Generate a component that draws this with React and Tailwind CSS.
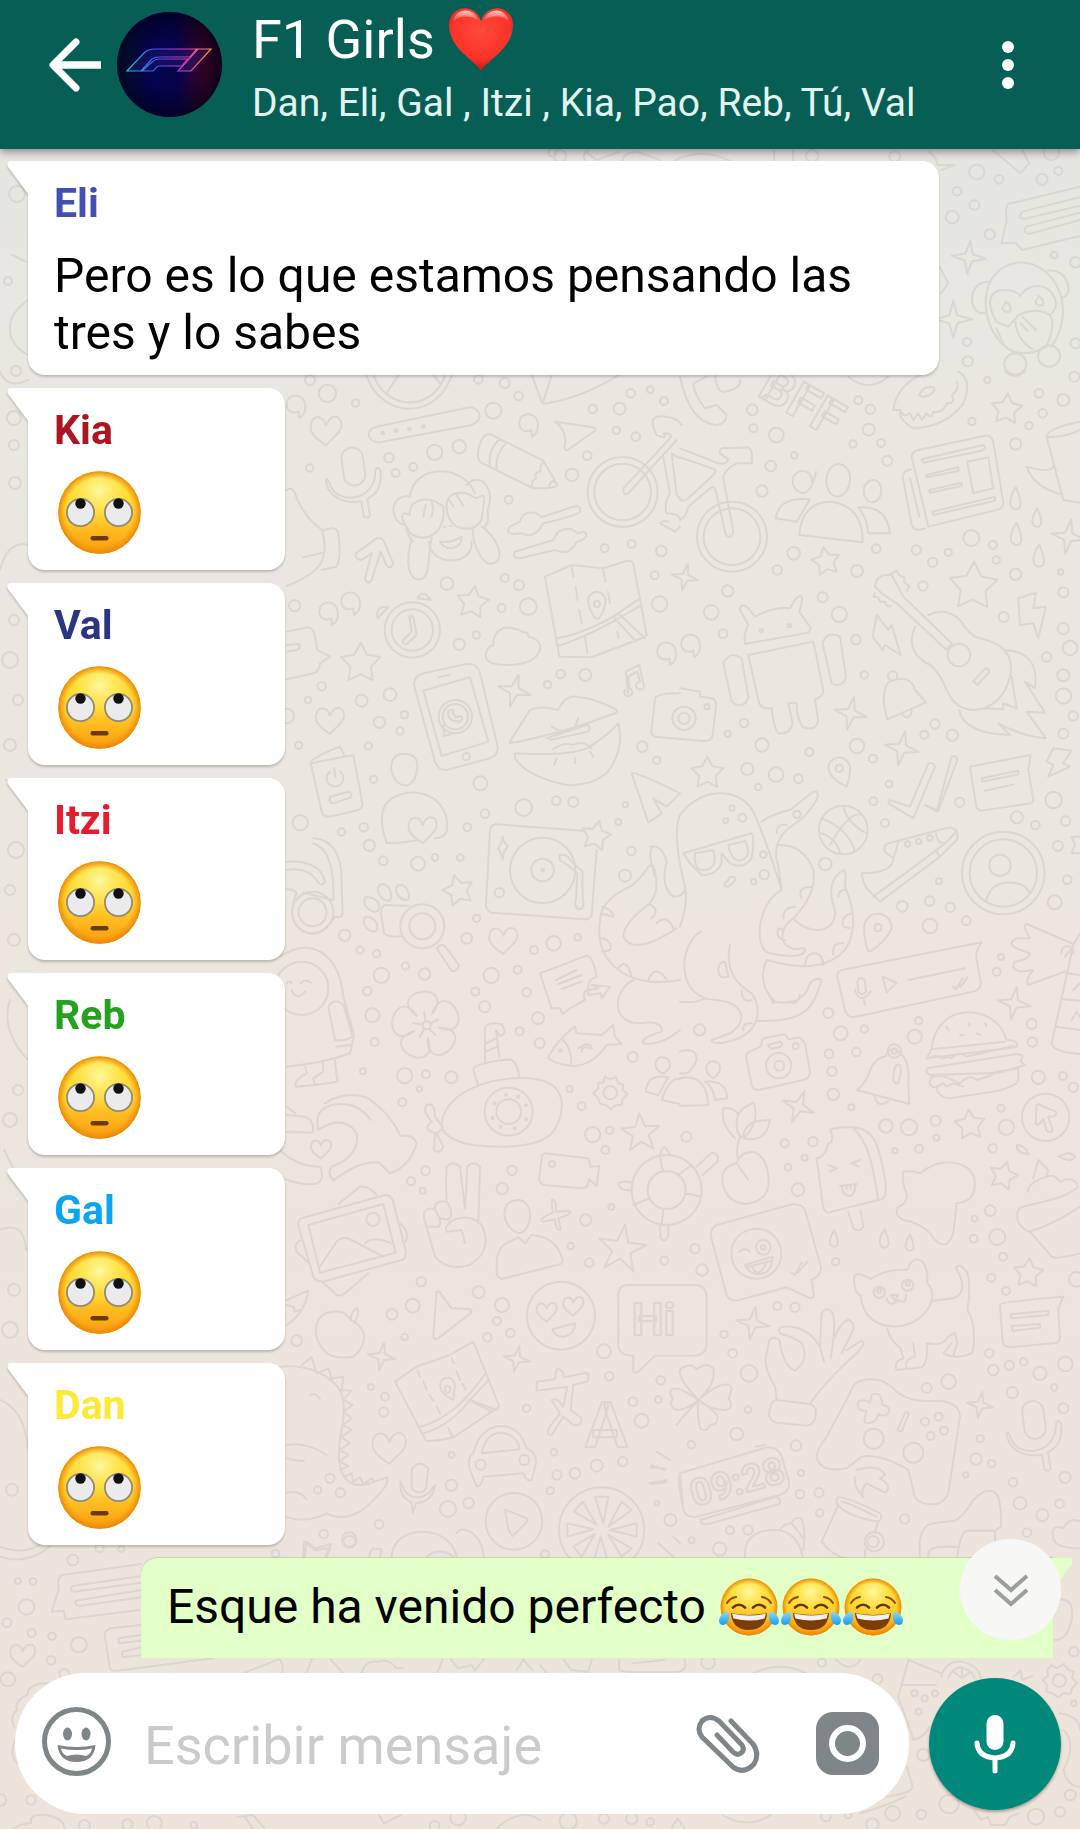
import React from "react";

/* ---------- wallpaper ---------- */

const star = (x, y, r, rot = 0, inner = 0.52) => {
  let d = "";
  for (let i = 0; i < 10; i++) {
    const a = ((rot + i * 36 - 90) * Math.PI) / 180;
    const k = i % 2 ? r * inner : r;
    d += (i ? "L" : "M") + (x + k * Math.cos(a)).toFixed(1) + " " + (y + k * Math.sin(a)).toFixed(1);
  }
  return d + "Z";
};
const spark = (x, y, r, rot = 10) => {
  let d = "";
  for (let i = 0; i < 8; i++) {
    const a = ((rot + i * 45 - 90) * Math.PI) / 180;
    const k = i % 2 ? r * 0.3 : r;
    d += (i ? "L" : "M") + (x + k * Math.cos(a)).toFixed(1) + " " + (y + k * Math.sin(a)).toFixed(1);
  }
  return d + "Z";
};
const heart = (x, y, s) =>
  `M${x} ${y + s}C${x - s * 0.6} ${y + s * 0.6} ${x - s * 1.1} ${y + s * 0.2} ${x - s} ${y - s * 0.3}C${x - s * 0.9} ${y - s} ${x - s * 0.2} ${y - s} ${x} ${y - s * 0.3}C${x + s * 0.3} ${y - s * 1.1} ${x + s} ${y - s} ${x + s} ${y - s * 0.3}C${x + s} ${y + s * 0.2} ${x + s * 0.4} ${y + s * 0.5} ${x} ${y + s}Z`;
const ring = (x, y, r) => `M${x - r} ${y}a${r} ${r} 0 1 0 ${2 * r} 0a${r} ${r} 0 1 0 ${-2 * r} 0`;
const quote = (x, y) =>
  `M${x + 28} ${y + 6}C${x + 28} ${y - 40} ${x - 32} ${y - 36} ${x - 28} ${y + 2}C${x - 26} ${y + 26} ${x} ${y + 26} ${x + 8} ${y + 20}L${x + 10} ${y + 40}Q${x + 28} ${y + 30} ${x + 28} ${y + 6}`;
const mic = (x, y) =>
  `M${x - 34} ${y - 70}a33 33 0 0 1 64 -4l8 62a33 33 0 0 1 -64 6ZM${x - 68} ${y + 12}c14 60 136 60 136 -40q6 -18 16 0c4 60 -22 76 -40 84l8 52q-6 8 -18 2l-8 -46c-60 10 -104 -20 -106 -64q2 -10 12 12`;
const drop = (x, y, s = 1) =>
  `M${x} ${y - 36 * s}C${x + 10 * s} ${y - 12 * s} ${x + 26 * s} ${y + 28 * s} ${x} ${y + 30 * s}C${x - 28 * s} ${y + 28 * s} ${x - 18 * s} ${y - 12 * s} ${x} ${y - 36 * s}Z`;
const flower = (x, y, r, rot) => {
  let d = "";
  for (let i = 0; i < 5; i++) {
    const p = (deg, k) => {
      const a = ((rot + i * 72 + deg - 90) * Math.PI) / 180;
      return (x + r * k * Math.cos(a)).toFixed(1) + " " + (y + r * k * Math.sin(a)).toFixed(1);
    };
    d += `M${p(-36, 0.4)}C${p(-42, 0.95)} ${p(-22, 1.08)} ${p(0, 1.02)}C${p(22, 1.08)} ${p(42, 0.95)} ${p(36, 0.4)}M${p(0, 0.14)}L${p(0, 0.4)}`;
  }
  return d;
};

const scenes = [
  {
    t: "translate(280 370) scale(.3333)",
    d: [
      "M255 0C290 150 480 160 520 0M275 0C310 130 470 130 500 0M320 70Q350 20 370 0M450 0L480 40",
      "M290 170L560 113C600 105 615 150 575 165L300 217C265 220 250 180 290 170Z",
      ring(308, 189, 4), ring(348, 182, 4), ring(388, 177, 4), ring(430, 170, 4),
      heart(138, 180, 46),
      quote(48, 104), quote(746, 160), quote(146, 725), quote(212, 695), quote(1160, 845),
      mic(218, 330),
      "M750 0L785 95Q790 104 802 100Q920 80 1040 0M820 0L790 95",
      "M825 155L940 172Q952 178 940 186L870 235Q856 248 853 232Q865 185 825 155Z",
      "M630 192L790 272L832 345Q830 356 760 355L608 280Q590 275 595 240Q605 190 630 192M660 206Q622 240 630 290M680 218Q645 250 650 298M790 275Q778 290 782 305Q762 305 768 325Q750 335 758 352M832 340Q812 325 808 348",
      "M390 380C400 280 550 280 585 370M390 380C330 370 325 450 372 465M560 345C600 300 650 360 622 420Q630 450 615 470M378 470Q382 500 400 515M490 410Q440 370 395 405L388 435Q362 420 368 450L390 490Q440 520 475 480Q495 450 490 410M500 410Q500 360 560 370L590 385Q618 365 612 395L605 450Q580 490 530 470Q500 450 500 410M395 505C380 560 380 620 410 628C455 635 440 570 455 505M578 480C580 530 610 590 640 580C680 570 650 500 605 470M447 515C450 590 580 590 575 515M480 515Q515 520 545 500Q545 530 515 535Q490 535 480 515M430 440L437 405M455 440Q462 410 455 398M520 410L505 385M550 408L528 372M492 470h5M510 468h5",
      "M690 470L720 455Q730 420 770 430L785 442L880 410Q905 405 900 425Q898 435 790 460Q765 510 725 490L700 492Q675 490 690 470M705 545L820 510Q835 470 875 478L895 490Q915 478 920 495Q920 508 890 515Q870 560 825 540L720 565Q695 565 705 545",
      ring(1028, 366, 105), ring(1028, 366, 85),
      "M1030 355L1170 205Q1180 190 1150 190Q1165 210 1130 195Q1095 130 1160 140Q1195 145 1205 165M1190 210L1045 370Q1030 380 1030 355",
      "M1150 262L1170 370Q1150 400 1160 430Q1190 430 1200 445M1175 250L1200 265M1175 250L1190 375L1205 390M1140 460L1185 485L1200 470M1140 460Q1150 450 1165 455",
      "M227 550L290 505Q305 500 312 515L340 580Q335 598 320 588L302 545L275 630Q262 648 255 625L275 550L245 570Q225 570 227 550",
      "M20 360Q40 345 50 385Q80 450 125 478Q140 520 130 560Q120 610 20 648M70 562L130 548M130 482Q170 465 175 490Q185 560 170 590L125 600",
      ring(397, 780, 83), ring(397, 780, 62),
      "M388 740Q398 732 402 750L410 795L380 822Q365 825 370 810L395 785ZM412 685Q430 655 452 690ZM293 745Q285 705 325 712Z",
      "M795 620L875 585L970 595L1040 573Q1055 570 1060 580L1100 795L1085 805L935 862L838 860ZM828 805Q900 795 1000 740L1080 685M832 828Q920 805 1080 708M1000 740L1068 815M1020 735L1095 805M875 590L880 620M887 650L893 690M898 720L905 760M915 800L922 850M970 600L976 635M984 665L990 700M1012 785L1016 805",
      "M945 745Q925 710 926 700A26 26 0 1 1 976 698Q975 715 958 745Z", ring(951, 702, 9),
      "M640 825Q640 780 680 772Q715 775 725 785Q745 785 745 800Q790 810 778 845Q760 885 680 885Q610 885 618 850Q622 830 640 825",
      "M20 785L85 772Q100 772 105 800L112 840L150 860L120 880Q118 905 100 910L20 928M20 825L55 822Q65 835 50 840L20 845",
      star(242, 880, 62, 0), star(578, 698, 50, 8), spark(703, 962, 50, 15),
      "M430 910L560 882Q590 878 600 910L652 1125Q658 1155 630 1165L500 1200Q475 1202 465 1175L403 950Q398 920 430 910M430 962L570 922L625 1115L485 1158ZM475 922L510 914",
      ring(526, 1040, 50), ring(526, 1040, 38), ring(559, 1160, 11),
      "M490 1065L492 1098L520 1090M505 1025Q500 1055 540 1055Q555 1045 540 1038L528 1042L518 1030L520 1020Q508 1018 505 1025",
      "M690 1115L750 1020Q785 1005 835 1020Q855 975 890 980Q960 988 1010 1020Q1015 1030 990 1035Q850 1090 690 1120ZM705 1150Q880 1160 930 1130Q990 1090 1015 1060Q1035 1140 980 1210Q930 1250 860 1245Q740 1220 705 1165ZM800 1105L920 1065Q935 1070 925 1085L810 1110M815 1070L840 1083M895 1045L885 1070M820 1138Q850 1115 880 1125Q910 1110 935 1135M830 1165L822 1185M885 1165V1180M930 1145L940 1160",
      "M1045 970L1038 905L1078 885L1090 940A12 12 0 1 1 1080 935L1072 905L1045 920L1048 955A12 12 0 1 1 1035 960",
      heart(150, 1050, 42),
      "M372 1152Q415 1150 412 1195Q405 1245 375 1247Q340 1240 333 1195Q335 1150 372 1152",
      "M92 1180Q90 1165 180 1130L195 1160M92 1180L220 1155L247 1300Q248 1315 235 1320L150 1340Q130 1342 125 1325ZM150 1205A25 25 0 1 0 180 1205M163 1195L166 1222",
    ],
    c: [[142,70,26],[227,99,11],[327,263,14],[347,309,12],[400,291,12],[464,247,23],[538,230,20],[640,122,24],[716,78,13],[595,28,13],[674,39,15],[938,117,13],[1019,116,18],[1052,70,13],[1111,59,10],[1152,93,12],[1009,181,11],[1067,200,13],[922,257,13],[876,315,19],[686,389,12],[89,294,11],[974,535,12],[1055,522,12],[1144,543,16],[501,641,19],[674,624,12],[717,646,15],[665,714,12],[745,710,25],[538,823,17],[589,795,11],[44,707,17],[1139,702,23],[1124,616,12],[842,912,13],[916,915,18],[803,944,11],[125,949,13],[84,990,10],[245,992,18],[330,974,19],[298,1057,17],[373,1034,11],[360,1083,11],[265,1128,11],[56,1126,11],[281,1228,11],[601,1240,21],[1087,1130,16],[1130,1171,11],[20,1038,22]],
  },
  {
    t: "translate(680 370) scale(.3333)",
    d: [
      "M0 20Q30 160 110 165Q140 160 140 135L110 105L75 115Q40 70 40 40L80 20M105 15Q110 70 135 65Q185 55 180 30",
      "M745 5Q650 40 640 120L660 120Q655 150 700 175Q800 170 850 100Q880 30 835 5M660 120Q670 145 690 130L700 150L715 130L725 150L740 130Q755 150 760 125Q790 130 800 100Q830 100 815 75Q840 60 830 35M718 75Q730 45 760 52Q770 60 750 75Q725 85 718 75",
      star(980, 118, 48, 5), star(438, 575, 44, -10), star(880, 650, 75, 2), star(82, 1210, 50, 0),
      ring(156, 500, 105), ring(156, 500, 85),
      "M0 235L115 280Q140 285 145 268L120 250Q115 230 145 235L205 232Q220 240 215 280L170 280Q130 300 130 325L160 485Q155 510 138 495L105 355Q100 348 90 355L25 410Q20 440 0 450M0 262L105 298Q108 305 100 315L25 385Q15 395 0 390",
      "M408 305Q395 370 367 370Q335 360 338 325Q350 300 370 303Q395 305 396 335",
      "M474 282C525 285 520 370 474 380C430 380 425 290 474 282ZM578 330C615 330 610 395 578 397C545 395 540 335 578 330ZM358 495Q365 395 455 395Q550 410 548 517ZM287 445Q295 380 390 388L350 455ZM535 412Q620 405 630 490H565Q560 440 535 412",
      "M715 240L915 197Q935 195 940 215L970 395Q972 415 950 420L745 470L695 260Q695 245 715 240ZM668 320Q670 300 695 298M668 320L695 465Q705 488 735 475M690 325L718 440M725 268L910 225Q920 235 905 242L730 278ZM738 315L835 292V303L740 322ZM748 360L845 338V348L750 368ZM758 425L945 380V392L760 435ZM862 275L925 262L940 355L880 370Z",
      "M1100 200Q1100 175 1200 155M1100 200L1150 390L1200 398M1120 290Q1110 310 1040 290Q1060 350 1140 372M1100 200Q1150 205 1200 180",
      drop(1008, 388), drop(1072, 445, 0.85), drop(1010, 495), drop(1078, 560),
      spark(1165, 500, 52), spark(15, 622, 40, 12), spark(512, 1030, 50, 12), spark(665, 1135, 52, 12),
      "M195 822Q190 790 205 765L180 720Q180 695 205 715L225 740Q280 710 330 715L345 690Q370 660 365 700L358 725L393 775L385 788ZM205 855L400 815L430 960Q430 980 405 988L415 1050Q410 1085 370 1072Q350 1050 350 998L325 1000L338 1060Q330 1095 295 1090Q280 1070 275 1015Q240 1020 235 990ZM130 880Q150 840 185 865L205 980Q200 1010 170 1005L155 995ZM428 820Q440 780 480 800L498 920Q490 955 455 940Z",
      ring(244, 782, 5), ring(328, 767, 5),
      "M585 650Q590 610 635 615L670 680L815 820L800 840L650 700Q600 670 585 650M635 610l15 -8l8 15l15 5l0 15l15 12l-8 15M585 670l-5 10l15 3l5 12l15 0l5 12l12 2",
      ring(837, 855, 34),
      "M745 735Q800 710 840 750Q870 800 900 805Q1010 830 990 920Q970 1000 900 1018Q830 1030 800 960Q770 890 740 880Q675 840 705 770M880 935L915 895Q930 895 925 910L892 945ZM980 840Q1080 850 1065 955L1035 935L1095 1028L1040 1025L1098 1105Q1030 1100 955 1060L990 1095Q850 1090 838 1020M995 920L1010 1015L970 1000V1018L910 1015",
      "M590 735L625 780L635 765L662 855L615 825L608 840L578 800ZM1015 685L1068 668L1060 715L1098 710L1075 805L1060 760L1020 765ZM1120 1135L1175 1142L1150 1180L1170 1190L1105 1220L1120 1185L1100 1175Z",
      "M630 935Q690 910 705 960L738 997L622 1048Q605 990 615 960Q618 940 630 935M668 1035Q690 1055 695 1022",
      quote(32, 822),
      "M0 955L60 965V980L95 985Q110 990 108 1010L98 1095Q95 1115 70 1113L-75 1100Q-90 1095 -85 1075L-75 985Q-70 970 0 970", ring(12, 1045, 35), ring(12, 1045, 17), ring(81, 1010, 8),
      "M490 1245Q445 1220 445 1190A33 33 0 0 1 510 1190Q512 1220 500 1250Z", ring(478, 1195, 11),
      "M870 1190L1052 1155L1045 1200L1060 1290Q1060 1300 1040 1302L905 1322Q890 1320 888 1305ZM905 1225L1015 1202V1213L908 1235ZM915 1262L1000 1244",
      "M630 1290L690 1310L745 1180Q760 1175 765 1190L700 1345L625 1300ZM735 1305L770 1325L815 1160Q830 1155 832 1170L775 1322Z",
      "M505 20Q565 70 625 20M975 5Q1005 30 1035 5",
    ],
    c: [[217,119,16],[220,175,12],[289,195,22],[343,256,10],[272,288,16],[246,363,17],[535,91,12],[571,118,14],[566,179,18],[519,222,11],[603,219,12],[622,272,15],[922,30,9],[1077,70,13],[1150,90,18],[1183,20,15],[1088,130,13],[1047,167,11],[876,154,11],[1007,222,17],[874,504,24],[939,525,12],[949,570,11],[1007,613,17],[1142,606,8],[1150,667,15],[709,540,14],[758,577,14],[805,547,11],[589,536,13],[531,603,18],[341,550,19],[292,600,14],[143,663,17],[94,727,22],[129,791,13],[428,682,15],[478,733,23],[528,809,14],[553,915,11],[729,648,14],[971,741,15],[1150,776,17],[1170,834,22],[1100,861,14],[1150,916,18],[1151,978,23],[1180,1038,14],[1150,1091,15],[638,918,14],[765,1062,14],[733,1094,12],[817,1096,17],[531,1128,22],[579,1166,12],[388,1146,12],[246,1125,20],[192,1059,13],[143,1092,9],[202,1197,18],[288,1214,22],[355,1226,13],[235,1251,10],[627,1242,10]],
    text: [["BFF", 228, 75, 150, 30]],
  },
  {
    t: "translate(280 790) scale(.3333)",
    d: [
      "M150 20L205 5Q218 10 212 22L160 40Q145 38 150 20",
      "M320 158Q285 60 335 25Q400 -10 460 25Q510 65 500 125Q490 145 465 145M320 158Q350 162 415 150", heart(428, 118, 42),
      "M1055 -50Q1060 -60 1200 10L1160 50L1120 25L1145 70L1105 98Z",
      "M650 103L910 122M950 180L935 375Q930 390 910 388L635 368Q615 360 618 340L630 120Q635 102 650 103", star(948, 138, 46, 12), ring(788, 241, 98), ring(788, 240, 34), ring(788, 240, 4), ring(658, 308, 14),
      "M668 140L672 155L684 170L672 185L668 208L662 190L654 175L664 160ZM840 195Q860 190 875 215L908 245V320Q915 355 900 358Q880 355 888 325L892 250Q860 220 845 215Q835 205 840 195",
      "M100 145Q190 150 185 290L188 370Q185 385 165 380Q120 450 70 425Q20 390 45 320Q60 300 20 298M20 215Q120 210 135 275Q125 295 110 270Q80 230 20 240M100 160Q165 180 160 330L70 308", ring(98, 367, 62), ring(98, 367, 42),
      "M255 322C290 318 305 345 293 364C275 370 245 350 255 322ZM298 285C325 275 340 310 330 332C305 335 285 305 298 285ZM352 288C375 275 392 310 385 328C365 335 340 310 352 288ZM255 382C280 375 300 405 288 424C268 430 242 405 255 382ZM385 348L315 345Q300 350 305 380L312 430Q330 445 365 438", ring(427, 409, 66), ring(427, 409, 39), "M470 475Q485 455 500 475L537 525Q535 545 515 543Z",
      star(535, 302, 48, -15), heart(670, 450, 42),
      "M0 500Q60 460 110 480Q180 510 190 620L222 735Q215 770 210 790Q130 820 20 830M145 650Q165 620 190 645L218 740Q190 755 165 750ZM170 770L210 765M75 825L80 850Q40 870 48 890L105 885L100 865L130 845L128 818M165 812L172 875L105 885M35 578Q25 570 20 580M62 580Q75 565 92 578M35 600Q50 635 75 605", ring(65, 595, 80),
      flower(438, 706, 100, -8),
      ring(440, 706, 12),
      "M780 550L920 497Q940 500 950 560Q920 570 925 600Q905 605 915 630L870 655L848 673L840 655L815 655ZM828 570L890 540M835 582L905 555M845 597L905 575M925 600L955 595L935 585L990 590L965 625L962 610L925 615Z",
      "M805 800Q840 740 885 710L890 730L965 735L1000 705L1005 740L1025 762L980 765Q940 825 880 828Q830 825 805 805M845 745Q880 780 872 828M895 775Q930 750 935 775Q905 765 905 785", ring(842, 782, 4),
      "M615 815V715Q620 695 665 702Q685 730 660 738L648 720L658 800M618 760L648 745M618 785L652 770M580 840Q580 820 690 808Q712 815 718 862M580 840L595 885M485 1000C500 880 700 850 780 870C870 890 850 980 820 1025C780 1075 660 1075 580 1065C520 1055 480 1030 485 1000M440 945Q465 935 465 980L480 1000Q500 1010 470 1030L490 1070Q480 1095 462 1080L465 1030Q435 1020 445 1005L455 995Q425 960 440 945", ring(686, 965, 72), ring(686, 965, 37),
      ring(678, 914, 3), ring(714, 920, 3), ring(738, 946, 3), ring(739, 988, 3), ring(704, 1015, 3), ring(662, 1010, 3), ring(638, 984, 3), ring(644, 940, 3),
      ring(991, 908, 20),
      "M975 860L990 868L1008 862L1015 880L1030 885L1028 900L1042 912L1028 928L1025 945L1008 945L992 958L978 945L960 942L955 925L940 910L955 895L955 878L970 878Z",
      star(1082, 1030, 60, -4, 0.42),
      "M115 1020Q100 960 155 945Q230 930 272 990M135 940Q200 900 265 925Q330 970 362 1038Q400 1030 410 1060Q390 1130 330 1150L298 1118Q240 1110 160 1172Q140 1150 155 1130Q240 1100 230 1030Q190 970 115 1020M20 975L75 980Q105 990 98 1028L20 1025M20 950L45 970M0 1080Q50 1130 120 1130Q135 1160 115 1180Q60 1190 0 1160", heart(123, 1076, 30),
      "M795 1090L925 1105L932 1130L958 1128L950 1188L928 1168Q925 1195 905 1195L790 1185Q775 1178 778 1160L785 1105Q785 1092 795 1090", ring(816, 1122, 9),
      "M960 395Q960 330 1050 290Q1080 270 1105 230Q1120 215 1125 245Q1140 300 1110 340Q1030 400 1030 440Q1060 500 1190 415M960 395C940 520 1050 600 1200 570M1060 570C1000 600 990 700 1080 700Q1150 690 1145 725Q1080 745 1090 760Q1140 770 1200 720M1110 170Q1145 160 1160 215Q1140 290 1180 320Q1205 322 1215 300M1112 345Q1140 360 1115 385M1130 400Q1160 370 1180 415M965 350Q1000 360 1000 380L968 372M960 445Q1000 450 990 480L968 485M1015 535Q1040 500 1055 560M1105 570Q1125 520 1160 568",
      "M1148 802Q1175 805 1168 835Q1150 855 1148 850Q1122 840 1128 815Q1135 800 1148 802M1098 905Q1100 850 1165 862L1135 915ZM1145 930Q1170 860 1200 868M1145 930L1200 942",
      "M1120 170Q1100 180 1125 260",
    ],
    c: [[61,98,23],[185,126,11],[251,112,13],[268,166,17],[310,212,13],[414,221,21],[465,202,10],[541,203,10],[562,112,12],[615,71,13],[731,53,25],[829,32,13],[880,36,15],[1036,44,8],[1015,96,9],[1054,183,13],[1035,257,18],[590,385,11],[560,445,16],[821,460,22],[893,442,10],[762,480,12],[713,539,12],[194,436,17],[240,480,11],[290,491,11],[304,556,23],[376,528,11],[434,552,17],[634,556,23],[262,603,13],[277,676,21],[284,756,12],[586,605,12],[614,650,17],[740,607,13],[774,685,18],[719,724,12],[779,760,15],[1058,801,15],[374,857,23],[438,853,12],[514,862,18],[418,897,8],[367,937,12],[249,844,9],[869,897,9],[905,949,12],[938,1034,23],[989,1021,11],[976,1080,12],[696,1141,14],[437,1142,13],[393,1174,12]],
  },
  {
    t: "translate(680 790) scale(.3333)",
    d: [
      "M0 75C60 -10 180 -10 220 65C250 130 280 220 305 300C230 340 220 480 270 490Q370 510 375 480Q375 470 350 478C290 470 300 410 340 385C380 345 410 290 400 240Q370 160 290 165M245 95Q280 70 330 60L400 5Q420 0 410 30Q380 80 340 105Q270 150 295 230L305 300M340 385C390 440 470 430 465 360C440 290 460 260 490 240Q500 240 495 290C530 370 530 450 480 495C420 540 350 535 260 510M10 190L215 130Q225 145 215 205Q190 240 150 220L125 190V215Q115 255 65 255L30 220ZM45 190L100 180Q115 235 75 240Q40 245 45 190M145 165L195 153Q220 205 175 212Q150 205 145 165M135 280L150 262Q170 255 163 275L145 290Q130 292 135 280M62 425C-10 470 -10 630 110 630C200 640 200 700 150 730L95 750Q95 762 130 758C240 740 250 660 215 610Q130 560 150 465M260 510C230 580 270 620 285 635Q370 650 390 580Q410 560 425 570C400 650 380 700 230 692M290 130Q290 100 320 105M365 325Q350 290 395 290M310 385Q310 350 345 350M315 450Q285 445 295 415L310 420M475 320Q475 300 495 300M515 370Q480 380 490 410L510 415M460 495Q455 455 490 460M375 525Q380 485 410 490Q430 500 430 525M115 540Q115 515 135 515L145 560Q115 570 115 540M185 600Q185 640 215 630M265 610L280 640M330 635Q350 650 360 615M190 720Q185 700 215 700M0 635Q50 640 75 625M0 75Q-25 130 15 290Q25 340 0 410",
      ring(490, 120, 73), "M425 85Q510 120 525 185M490 48Q500 100 560 130M450 165Q510 60 545 75M425 130Q470 145 480 190",
      "M545 250Q640 250 640 205L615 185Q610 165 625 160L810 112Q840 120 830 150L780 200L600 335L570 305Q550 290 545 250M580 320L770 180Q810 150 828 125M655 155Q650 180 640 205M765 180L780 200M768 130Q770 155 790 160", ring(683, 162, 8), ring(716, 154, 8), ring(750, 144, 8),
      ring(970, 249, 124), ring(970, 249, 101), ring(960, 226, 32), "M918 335Q930 280 980 278Q1030 275 1048 305",
      "M565 485Q550 440 553 410A41 41 0 1 1 635 415Q620 450 575 482Z", ring(594, 413, 11),
      "M485 540L905 457Q885 485 890 505L903 580Q900 600 880 605L520 682Q500 680 495 660L472 560Q470 545 485 540ZM532 575Q540 555 555 572L558 605Q545 620 535 605ZM525 600Q540 645 572 605M552 630L555 645M608 560L650 578L620 608ZM685 570L855 535M818 590L828 598L848 565M835 585L842 590L862 562",
      "M1180 462L1040 402Q1025 405 1050 445L1010 445Q980 460 1010 475L1050 490Q1045 510 1005 515Q990 535 1020 545L1060 540Q1035 570 1045 585L1155 545M1145 490A18 18 0 1 1 1180 490M1155 500L1175 475M1200 430L1180 465L1115 760Q1115 785 1200 792M1160 550L1200 555M1150 628L1200 632M1130 710L1200 720M1180 600L1200 580M1175 690L1190 665L1200 680",
      spark(1002, 640, 50), spark(355, 950, 50, 22),
      "M755 775C770 630 950 640 980 750Q1020 750 1008 772L740 805L755 778L975 755M745 805Q770 790 785 805Q810 800 815 805Q840 780 860 800L1000 768M742 835L1010 792Q1040 795 1020 812L1035 825L960 848L750 855Q735 850 742 835M750 870Q760 850 800 862L840 880Q870 850 890 870Q930 860 950 845L1015 835V870Q1010 890 940 905L810 925Q770 920 770 890L790 880L800 890L820 880L850 890M750 870Q745 890 765 892M800 710L805 720M840 735H850M868 700V708M915 700L920 708M890 730L900 734",
      "M210 785L245 768Q240 745 262 742L315 733L325 748L360 742L375 760L390 845Q390 865 370 870L235 900Q220 900 215 885L198 800Q198 790 210 785M265 765L300 755Q315 765 298 772L272 776Z", ring(296, 827, 38), ring(298, 827, 15), ring(347, 769, 9),
      "M615 800Q635 760 660 790Q690 810 685 880L688 942L530 900Q560 880 570 840Q590 800 615 800M585 920Q590 955 625 935M645 830Q665 810 662 850L655 880Q640 885 640 860Z", ring(643, 783, 20), ring(643, 783, 8),
      "M165 1045Q120 1000 130 955Q160 950 175 975Q180 955 222 938Q240 1000 190 1045Q160 1030 175 970M190 1045Q190 990 270 990Q260 1060 190 1045M180 1040Q165 1080 175 1110M170 1120Q120 1130 128 1180Q140 1240 200 1242Q275 1230 265 1160Q260 1100 220 1085Q180 1085 170 1120L205 1170",
      ring(1097, 982, 71), "M1070 945Q1075 940 1085 948L1128 965Q1135 978 1105 982L1118 1020Q1112 1032 1100 1022L1090 988L1075 1005Q1065 1005 1068 990Z",
      star(870, 1005, 47, -5), star(970, 1158, 44, 15),
      "M450 1020Q460 1040 455 1055Q440 1060 440 1080Q425 1105 410 1105L430 1255Q440 1275 455 1265L595 1230Q620 1230 618 1190C600 1060 580 1010 510 1012Q470 1010 450 1020M520 1015C570 1060 580 1140 595 1230M445 1125L470 1135L450 1145M540 1110L515 1120L535 1130M480 1188L530 1182M485 1188Q490 1220 510 1218Q528 1210 525 1182M500 1188V1198M512 1185V1196M505 1265L520 1315Q540 1330 550 1310L542 1260",
      "M670 1145Q690 1140 720 1150Q770 1110 820 1118C890 1130 890 1180 880 1210Q870 1235 830 1240L820 1330Q800 1385 765 1350C740 1310 700 1295 670 1290Q640 1275 655 1250Q685 1240 680 1210Q665 1180 670 1145",
      "M0 865Q80 850 85 945L0 948M75 875Q140 870 142 925L105 930Q100 890 75 875M0 785Q50 770 50 810Q30 860 0 850", "M99 814Q125 815 118 845Q105 865 99 864Q75 850 80 828Q88 812 99 814",
      "M1060 1165L1075 1110L1105 1140L1100 1155M1045 1205Q1040 1180 1100 1160Q1120 1150 1140 1175Q1180 1155 1195 1190Q1170 1220 1050 1245M1050 1245Q1020 1250 1015 1260Q1000 1300 1045 1325Q1110 1310 1200 1250M1050 1325L1115 1400Q1130 1410 1200 1390",
      "M50 1130L95 1088Q120 1090 112 1115L68 1155",
      "M1010 1065Q1035 1065 1045 1092Q1010 1090 1010 1065M1138 1100Q1170 1080 1185 1100Q1175 1120 1138 1100M1200 140L1175 140L1185 165L1175 190L1200 190",
    ],
    c: [[156,54,8],[187,83,12],[137,92,7],[250,194,10],[253,254,14],[221,275,8],[351,73,11],[436,222,19],[580,34,12],[615,99,12],[839,37,14],[1121,30,25],[1011,82,18],[1066,105,13],[1157,93,14],[1134,168,15],[777,274,9],[667,349,16],[749,333,14],[811,352,14],[750,408,22],[859,392,13],[1162,269,13],[1124,337,21],[963,501,9],[950,545,12],[59,720,17],[445,669,15],[482,730,21],[553,717,11],[447,791,13],[529,786,13],[456,844,14],[460,913,17],[514,952,9],[716,692,11],[704,740,21],[1055,702,15],[1057,756,14],[1075,862,20],[1149,858,12],[1180,892,14],[19,1040,15],[314,1060,12],[399,1055,14],[374,1103,9],[324,1132,10],[618,1008,20],[687,1012,24],[767,992,15],[769,1043,9],[717,1076,12],[645,1082,8],[963,955,11],[979,1012,23],[938,1075,13]],
  },
  {
    t: "translate(280 1180) scale(.3333)",
    d: [
      "M65 115L315 45Q332 45 338 60L378 215Q378 235 365 240L130 305Q105 305 100 290L55 135Q52 120 65 115ZM85 135L310 72L347 218L120 278ZM175 72L240 20Q265 15 290 45M360 130Q388 150 378 185M60 180Q40 195 50 215L85 248M130 308L170 345Q180 350 195 340L265 280M118 262L170 185Q190 165 215 180L310 230M255 190Q280 165 335 190", ring(279, 118, 20),
      "M440 140C420 90 440 80 465 88Q460 60 500 65L498 0M500 -40Q520 -60 540 -40L555 85L562 -40Q580 -60 600 -40L595 130M498 0L500 -40M440 140L465 230Q500 275 570 255Q640 210 605 135Q570 100 520 120Q490 140 500 155L545 150Q550 165 555 190M465 88Q490 130 475 140L442 140M500 65Q525 100 505 120L480 115",
      "M712 60C765 60 760 150 718 160C670 150 650 65 712 60ZM652 290Q640 200 690 185L715 172L735 190L755 165Q830 170 848 240Q850 252 830 255L665 297ZM815 60Q830 55 828 95L865 92Q885 100 835 115L842 148Q830 158 825 118L790 125Q770 120 818 98Z",
      star(1025, 208, 75, 8, 0.38), ring(843, 407, 102), heart(800, 395, 30), heart(880, 377, 30), "M817 448L885 430Q885 465 850 470Q825 470 817 448",
      "M470 335Q478 330 485 345L515 385L570 388Q580 395 565 405L475 475Q460 482 460 465Z",
      "M1125 527H1240Q1280 527 1280 490V350Q1278 315 1245 315H1045Q1015 315 1015 345V500Q1020 527 1060 527V575Q1065 582 1075 575Z",
      "M180 395Q110 390 108 450Q105 480 135 515Q160 540 220 530Q260 500 250 455Q235 430 212 420Q200 400 180 395M212 420Q215 390 232 385Q240 400 222 430M20 360L85 332Q75 400 20 435M20 375L40 380L45 395L60 390",
      spark(305, 530, 42), spark(710, 537, 40, 12),
      "M345 605L410 560L510 525L580 485L658 680L520 772Q470 785 438 782ZM415 742Q500 720 570 640L618 580M428 762Q520 730 570 660L628 598M570 660L650 690M565 660L630 692M412 570L420 590M430 605L440 630M448 645L460 662M515 535L522 550M530 575L540 600M548 612L558 630M470 680L480 700M505 745L518 770",
      "M520 660Q480 640 481 620A22 22 0 1 1 524 620ZM495 628A8 8 0 1 0 510 628A8 8 0 1 0 495 628",
      "M0 560Q120 550 180 630Q200 670 185 750C165 850 180 920 250 915Q300 900 320 892Q330 910 290 950C230 1020 180 1020 140 1000Q80 1030 20 1012M20 795Q80 785 140 825M20 835Q50 845 72 843M20 938Q60 930 80 958M90 645Q110 635 120 660M65 555L95 532L110 580L145 565L155 595L190 590L185 630L215 632L190 660L218 675L190 695L215 715L188 735L215 750L185 770L208 790L178 810L205 825L178 845L205 858L180 870L195 890L215 880L220 905L240 892L250 912L275 895L285 905",
      heart(328, 802, 50), "M395 870Q415 835 445 865L438 925Q420 950 395 925ZM362 905Q355 950 395 968L398 1000L408 970Q460 965 465 915Q455 925 450 935Q410 970 375 935Z",
      "M580 820Q600 740 665 738Q720 740 740 805Q770 815 768 850L755 900Q740 908 730 880L610 890Q605 920 590 920L570 870Q560 830 580 820M605 820Q615 760 665 758Q715 765 718 808Z", ring(602, 854, 15), ring(733, 840, 15), ring(702, 1024, 85),
      "M675 988L740 1015Q745 1022 738 1028L698 1068L685 1050Z",
      ring(965, 1050, 128),
      "M945 950H985L970 1030ZM1025 965L1055 990L985 1040ZM1070 1030V1070L990 1050ZM1055 1105L1025 1130L985 1065ZM985 1150H940L962 1070ZM905 1130L880 1100L945 1062ZM862 1070V1030L940 1048ZM882 995L908 965L950 1035Z",
      "M830 568Q850 565 852 592L920 578Q930 590 922 605L880 615L872 690L905 715Q905 740 880 735L850 710L815 765Q795 765 810 740L840 700L815 660Q830 650 850 680L862 620L770 632V605L825 598Z",
      "M1130 815L1170 840M1110 862L1158 866M1108 910L1160 900M1115 855L1155 870M1115 912L1160 907",
      "M335 1130C340 1030 510 1030 530 1130M440 1130Q480 1100 520 1130M530 1060Q540 1040 570 1055Q610 1080 612 1140M268 1130Q270 1095 305 1110L300 1130M70 1130L72 1085L105 1110L150 1105L140 1130",
      ring(1160, 30, 105), ring(1160, 30, 57),
      "M1060 75L1108 55M1145 135L1150 87M1215 40L1265 50M1195 -15L1235 -45M1140 134L1142 175Q1155 190 1165 170V134M1015 10Q1020 35 1055 30M1015 10Q1030 0 1058 8M1140 -75Q1150 -120 1170 -75M1140 -75L1148 -28",
      "M1135 1090L1180 1130M1180 1070L1200 1090",
    ],
    c: [[424,305,14],[398,377,21],[336,403,16],[374,471,10],[596,337,18],[666,375,21],[651,423,12],[622,472,13],[691,459,13],[667,26,17],[428,32,9],[917,120,17],[994,81,9],[872,198,10],[928,248,13],[1153,242,12],[972,514,21],[988,589,13],[50,482,16],[273,621,9],[315,650,12],[311,696,14],[515,824,9],[740,685,11],[1059,665,13],[1085,722,21],[1142,601,13],[1135,659,10],[822,817,10],[831,885,14],[885,880,16],[950,857,18],[1028,845,14],[811,932,11],[514,916,17],[566,969,16],[504,987,24],[150,895,14],[113,930,11],[181,938,14],[297,1033,13],[208,1079,22],[131,1062,13],[1131,970,7],[1171,1020,18],[795,1123,12]],
    text: [["Hi", 1055, 465, 135, 0], ["A", 915, 800, 190, 0]],
  },
  {
    t: "translate(680 1180) scale(.3333)",
    d: [
      "M110 135L340 72Q365 72 375 90L423 260Q425 285 395 300L402 350Q395 358 380 350L320 322L170 362Q145 360 140 345L93 170Q90 145 110 135", ring(229, 221, 75), ring(250, 202, 22), ring(250, 202, 7),
      "M178 215Q195 200 210 215M195 255L278 230Q275 280 240 282Q210 285 195 255M200 262L275 242M218 262Q235 300 258 250M335 278L345 285L365 248M355 278L382 245",
      drop(463, 178, 0.75), drop(614, 178, 0.85), drop(690, 190, 0.75),
      "M572 297Q520 265 522 300Q525 345 542 345C550 480 740 460 758 350Q755 320 742 310C745 250 720 220 690 250L683 270Q620 265 572 297M758 362L820 355C860 340 850 300 828 265Q835 245 860 275Q875 310 862 390C890 430 885 520 870 522Q830 540 790 520L815 490M622 447Q630 480 662 505L670 535Q640 545 650 570L725 562Q745 550 740 490Q790 500 805 470L825 458L832 490L820 525M700 490L705 530Q670 540 680 565M620 355Q630 385 655 360Q680 375 678 345M632 345H655L645 360Z", ring(598, 337, 17), ring(683, 316, 17), ring(598, 332, 6), ring(683, 311, 6),
      "M290 655L285 620Q250 560 258 530L268 480Q280 465 298 480Q310 560 345 572Q390 540 365 490Q340 470 302 462Q290 445 310 440Q380 435 420 500L432 545M420 500L425 400Q440 375 458 400Q470 430 452 535M465 470Q480 430 505 418Q530 430 515 460L485 520M500 510L545 482Q560 490 530 520Q440 600 392 668M290 660L390 672Q415 680 405 715Q400 740 370 736L290 728Q260 720 270 685Q275 660 290 660",
      "M960 375Q960 365 1150 350L1135 385L1140 475Q1140 490 1120 490L990 502Q970 500 968 485ZM992 403L1105 392V405L995 415ZM995 438L1080 432V443L998 453Z",
      star(1045, 280, 46, 5), spark(218, 430, 50), spark(900, 675, 40),
      "M535 605C580 590 620 600 650 635C690 665 720 665 780 662Q840 670 840 710L805 940Q790 975 755 973Q700 970 700 930L685 870Q600 820 545 830L500 865Q420 880 410 830Q410 810 440 770L510 640Q520 610 535 605M575 645Q605 630 607 675Q640 680 620 705Q600 710 595 700Q590 735 555 728Q550 720 560 695Q525 690 535 665Q550 655 570 668ZM677 695L687 700L665 755L652 750Z", ring(581, 776, 30), ring(700, 818, 30),
      mic(1060, 760),
      "M0 880L260 802Q295 800 305 830L327 905Q330 935 300 945L50 1010Q20 1015 10 990ZM0 880Q-10 890 10 990M62 1020L290 950Q305 960 298 972L85 1032Q60 1035 62 1020M228 800L255 795",
      "M530 870Q600 850 615 885L600 895Q640 920 615 938L560 910Q540 930 550 952Q520 920 525 890M470 955Q480 940 600 1000Q610 1015 595 1025Q500 1010 470 970ZM485 965Q500 965 590 1010M475 975L425 1085Q460 1130 500 1135M595 1025L585 1055M555 1110V1130", ring(583, 1085, 29), ring(579, 1085, 17),
      "M720 1130Q710 1030 770 1028L825 1022Q850 1010 880 960Q930 910 955 950Q965 990 963 1040L945 1052H860Q840 1060 832 1130M745 1130Q740 1105 780 1100H830M945 1052V1080",
      "M195 1130Q190 1060 270 1050Q350 1045 368 1130M300 1050Q310 1030 335 1030Q340 1010 365 1015Q378 1050 370 1110M335 1030L370 1075",
      "M55 660Q-30 570 15 560Q35 550 50 568Q80 545 100 565Q110 610 55 660Q140 590 155 625Q150 650 145 655Q165 685 135 690Q90 690 55 660Q120 700 112 720Q110 735 90 735Q80 760 60 745Q50 690 55 660Q0 720 -10 735M55 660Q-10 615 -25 628Q-35 640 -22 655Q-35 680 -10 690Q20 690 55 660",
      "M1120 1075Q1110 1030 1150 1045Q1170 1010 1200 1025M1120 1075Q1125 1105 1200 1105",
    ],
    c: [[354,29,19],[66,270,17],[45,206,14],[292,379,12],[345,382,14],[467,245,11],[132,463,11],[158,520,13],[207,580,25],[204,689,10],[170,762,19],[34,794,11],[348,797,16],[363,879,9],[360,943,13],[417,938,14],[419,999,11],[931,92,16],[884,116,9],[881,176,12],[952,171,24],[969,230,12],[934,293,12],[978,333,12],[1189,298,22],[928,520,13],[940,570,16],[988,556,14],[1031,545,11],[1080,580,20],[1156,552,22],[1123,622,10],[997,638,17],[1150,685,15],[740,624,15],[806,605,22],[735,725,12],[776,710,12],[752,768,12],[792,752,12],[901,776,11],[888,837,17],[935,851,11],[857,885,8],[999,907,13],[1155,892,17],[1020,970,19],[1087,1005,18],[1139,971,13],[1041,1058,13],[674,1017,14],[204,1050,14],[150,1051,12],[35,1081,9],[119,1107,20]],
    text: [["09:28", 42, 980, 112, -15]],
  },
  {
    t: "translate(540 0) scale(.3444 .3333)",
    d: [
      "M1130 455Q1150 470 1155 495L1205 495L1165 510M1315 450L1395 520L1420 490L1400 450",
      "M1568 560L1360 612Q1350 620 1355 660L1340 730L1380 728L1400 750L1568 708M1568 592L1400 635Q1385 655 1405 657L1568 617M1568 638L1412 680Q1400 698 1420 702L1568 660",
      spark(1245, 772, 50, 5), spark(1200, 958, 55, 0),
      "M1345 1035C1270 960 1270 800 1395 787C1500 790 1560 930 1485 1040M1300 845Q1250 850 1255 910Q1262 940 1290 940M1475 812Q1530 810 1535 870Q1530 890 1515 895M1325 965C1290 900 1310 870 1350 870Q1380 870 1395 888C1420 840 1500 850 1498 920Q1490 940 1480 945M1325 965L1360 980L1390 945Q1440 920 1480 945Q1500 970 1470 1040Q1400 1080 1350 1040L1325 985M1380 965Q1385 1020 1430 1048M1400 950L1440 990M1395 970L1415 992",
      "M1353 905Q1370 915 1365 935Q1350 940 1342 925ZM1448 888Q1465 900 1460 915Q1442 920 1438 905Z", ring(1380, 1092, 32), ring(1478, 1068, 32),
      "M130 455L165 480L230 455M130 480Q120 465 140 450M240 482Q240 460 280 455L350 480M390 482Q470 440 550 482M680 482V450M735 482V450M1160 800L1185 850L1165 880",
    ],
    c: [[1268,516,22],[1333,538,13],[1211,574,13],[1261,615,14],[1197,651,19],[1306,703,15],[1458,538,16],[1505,513,12],[1485,458,22],[1493,765,10],[1555,787,16],[1240,1026,12],[1242,1084,15],[1555,1030,15],[1030,470,16],[790,468,18],[36,458,12]],
  },
  {
    t: "translate(0 1540) scale(.3444 .3333)",
    d: [
      "M0 50Q90 80 165 0M0 20Q80 50 135 0",
      "M410 72L180 105Q165 110 170 150L150 215L185 212L190 238L405 210M410 108L210 138Q200 150 215 155L410 128M410 150L220 182Q215 195 230 198L410 172M410 255L320 265Q300 275 305 290L318 380Q320 395 340 392L620 355M410 285L345 295V310L410 302M410 322L355 335V352L410 345",
      heart(66, 345, 36),
      "M140 430Q80 430 80 465Q40 480 50 510Q25 530 42 560M45 600Q25 640 50 670M710 398L810 358Q825 370 820 398M890 398L905 358M960 358L995 398M1050 398Q1060 360 1100 365Q1130 355 1150 385H1170M1270 398L1285 358M1310 358L1330 385L1370 375L1378 392L1405 358M1500 390L1520 358L1545 390",
      "M40 867Q60 850 90 850Q85 820 130 825Q180 830 190 867M690 830L735 825L770 867M710 830L735 867M1100 825L1115 850L1165 825M1440 867Q1510 800 1568 840",
      "M885 50L890 5L915 25L962 12L945 50",
    ],
    c: [[212,60,16],[289,25,12],[352,27,9],[52,123,9],[96,124,10],[77,201,23],[20,248,13],[92,279,12],[151,289,11],[229,314,23],[148,361,13],[23,418,21],[187,402,15],[90,780,14],[0,780,18],[245,856,16],[370,853,15],[448,850,22],[563,855,10],[1262,857,14],[1330,833,23],[800,41,11],[1015,5,18]],
  },
  {
    t: "translate(540 1530) scale(.3444 .3333)",
    d: [
      "M1070 390L1165 430M1070 390L1040 500L1085 630Q1120 620 1130 590M1050 465H1150M1165 440Q1180 390 1225 395Q1280 410 1280 450M1185 445Q1200 410 1225 412Q1260 425 1262 445M1225 412V445M1200 425L1225 445L1250 425",
      ring(1508, 452, 19), "M1485 405L1500 415L1520 402L1535 420L1550 425L1545 445L1560 458L1545 475L1540 492L1520 490L1505 502L1488 490L1470 485L1472 465L1460 450L1475 438L1473 420Z",
      "M1375 440L1395 422L1400 450L1430 438M1065 710L1082 770Q1080 790 1005 800M1520 600Q1560 640 1520 720Q1530 770 1568 770M1500 210Q1550 200 1545 260Q1535 330 1495 330M1510 550Q1568 560 1568 600",
      "M1260 840L1280 870L1300 860L1310 885H1350L1365 860L1390 850M0 405L20 430M70 390L90 420L140 425L150 390M230 390V420Q240 430 400 425Q430 420 420 390M270 400L360 390M600 440Q700 380 790 440M860 390Q900 430 930 390M530 855Q600 900 670 855M380 897L400 865L420 897M930 850Q1000 830 1060 800",
    ],
    c: [[488,397,20],[818,398,12],[980,447,14],[1087,490,9],[1117,505,9],[1147,490,9],[1100,545,9],[1113,675,18],[1024,850,22],[1107,853,14],[1188,822,28],[82,873,25],[185,866,15],[266,866,17],[320,876,11],[830,860,14],[895,855,10],[965,883,18],[1440,860,24],[1510,845,15],[1540,795,16],[1550,365,14],[1550,520,8]],
  },
  {
    t: "scale(.3333)",
    d: ["M84 900Q24 945 30 990Q30 1035 84 1065M36 765L78 786M0 1116Q24 1170 84 1140M0 1710Q24 1620 84 1635M18 2340L78 2370M30 3000Q0 3090 84 3180M12 3450L72 3570M0 3690Q72 3660 78 3750M0 4200Q75 4230 84 4350"],
    c: [[51,582,24],[24,843,12],[48,1113,15],[42,1254,21],[42,1335,15],[45,1449,18],[42,1860,15],[30,1980,24],[54,2100,15],[30,2235,18],[48,2550,24],[30,2670,15],[42,2820,18],[54,3270,15],[30,3360,21],[42,3870,18],[30,3990,24],[54,4110,15],[36,4470,18],[930,1140,15],[1680,468,18]],
  },
];

function Wallpaper() {
  return (
    <svg
      aria-hidden="true"
      viewBox="0 0 1080 1829"
      preserveAspectRatio="xMidYMin slice"
      className="pointer-events-none absolute inset-0 h-full w-full"
      fill="none"
      stroke="#dbd6cf"
      strokeWidth="6"
      strokeLinecap="round"
      strokeLinejoin="round"
    >
      {scenes.map((s, i) => (
        <g key={i} transform={s.t}>
          <path d={s.d.join("")} />
          {s.c.map(([x, y, r], k) => (
            <circle key={k} cx={x} cy={y} r={r} />
          ))}
          {(s.text || []).map(([t, x, y, size, rot]) => (
            <text key={t} x={x} y={y} fontSize={size} fontWeight="700" fontFamily="Roboto, sans-serif" transform={`rotate(${rot} ${x} ${y})`}>
              {t}
            </text>
          ))}
        </g>
      ))}
    </svg>
  );
}

/* ---------- emoji ---------- */

function EmojiDefs() {
  return (
    <svg aria-hidden="true" className="absolute h-0 w-0">
      <defs>
        <linearGradient id="face" x1="0" y1="0" x2="0" y2="1">
          <stop offset="0" stopColor="#ffe23c" />
          <stop offset=".5" stopColor="#ffd32e" />
          <stop offset="1" stopColor="#fb9a0e" />
        </linearGradient>
        <radialGradient id="rim" cx=".5" cy=".5" r=".5">
          <stop offset=".82" stopColor="#f0900a" stopOpacity="0" />
          <stop offset="1" stopColor="#ea8506" stopOpacity=".95" />
        </radialGradient>
        <radialGradient id="shine" cx=".5" cy=".24" r=".4">
          <stop offset="0" stopColor="#fffcb0" stopOpacity=".9" />
          <stop offset="1" stopColor="#ffe94a" stopOpacity="0" />
        </radialGradient>
        <linearGradient id="tear" x1="0" y1="0" x2="0" y2="1">
          <stop offset="0" stopColor="#8ddcff" />
          <stop offset="1" stopColor="#1b9df0" />
        </linearGradient>
        <radialGradient id="love" cx=".5" cy=".35" r=".65">
          <stop offset="0" stopColor="#ff4a3a" />
          <stop offset=".7" stopColor="#fb3229" />
          <stop offset="1" stopColor="#c9160f" />
        </radialGradient>
        <linearGradient id="gloss" x1="0" y1="0" x2="0" y2="1">
          <stop offset="0" stopColor="#fff" stopOpacity=".75" />
          <stop offset="1" stopColor="#fff" stopOpacity="0" />
        </linearGradient>
      </defs>
    </svg>
  );
}

function EyeRoll() {
  return (
    <svg role="img" aria-label="🙄" viewBox="0 0 83 83" className="ml-[4px] block size-[83px]">
      <circle cx="41.5" cy="41.5" r="41.3" fill="url(#face)" />
      <circle cx="41.5" cy="41.5" r="41.3" fill="url(#shine)" />
      <circle cx="41.5" cy="41.5" r="41.3" fill="url(#rim)" />
      {[22.5, 60.5].map((x) => (
        <g key={x}>
          <circle cx={x} cy="41.5" r="13.6" fill="#ebebee" stroke="#8f8a78" strokeWidth="1.8" />
          <circle cx={x} cy="32.5" r="5.2" fill="#111" />
        </g>
      ))}
      <rect x="32.5" y="65" width="18" height="4.4" rx="2.2" fill="#6b3b05" />
    </svg>
  );
}

function Joy() {
  return (
    <svg role="img" aria-label="😂" viewBox="0 0 62 58" className="block h-[58px] w-[62px] shrink-0">
      <circle cx="31" cy="29" r="28.4" fill="url(#face)" />
      <circle cx="31" cy="29" r="28.4" fill="url(#shine)" />
      <circle cx="31" cy="29" r="28.4" fill="url(#rim)" />
      <path d="M9 25Q12 20 18 19M53 25Q50 20 44 19" fill="none" stroke="#8a4a08" strokeWidth="2" strokeLinecap="round" />
      <path d="M15 29.500Q21 24 27 29.500M35 29.500Q41 24 47 29.500" fill="none" stroke="#6b3503" strokeWidth="2.600" strokeLinecap="round" />
      <path d="M13 35Q31 39 49 35Q48 52 31 52Q14 52 13 35Z" fill="#7a3d05" />
      <path d="M14 35.500Q31 39.500 48 35.500L46.500 40.500Q31 44.500 15.500 40.500Z" fill="#f4f1f0" />
      <path d="M10 33Q13 42 8 46Q1 49 1 42Q2 36 10 33ZM52 33Q49 42 54 46Q61 49 61 42Q60 36 52 33Z" fill="url(#tear)" />
    </svg>
  );
}

function Heart() {
  return (
    <svg role="img" aria-label="❤️" viewBox="0 0 66 66" className="block size-[66px] shrink-0">
      <path d="M33 65C28 55 1 43 1 19C1 0 26-5 33 15C40-5 65 0 65 19C65 43 38 55 33 65Z" fill="url(#love)" />
      <path d="M5 16C7 2 25 0 30 14C22 9 11 9 5 16ZM61 16C59 2 41 0 36 14C44 9 55 9 61 16Z" fill="url(#gloss)" />
    </svg>
  );
}

/* ---------- chat ---------- */

const people = [
  { name: "Kia", color: "text-[#ad1520]" },
  { name: "Val", color: "text-[#2c3583]" },
  { name: "Itzi", color: "text-[#e51c2b]" },
  { name: "Reb", color: "text-[#25a11f]" },
  { name: "Gal", color: "text-[#0aa5f0]" },
  { name: "Dan", color: "text-[#ffe936]" },
];

function Incoming({ name, color, className = "", children }) {
  return (
    <li className={`relative rounded-[17px] rounded-tl-none bg-white px-[26px] pt-[18px] drop-shadow-[0_2px_1px_rgba(0,0,0,0.2)] ${className}`}>
      <svg aria-hidden="true" viewBox="0 0 22 34" className="absolute top-0 -left-[21px] h-[34px] w-[22px]">
        <path d="M3 0H22V34L1 6Q-1 1 3 0Z" fill="#fff" />
      </svg>
      <h2 className={`text-[41px] leading-[48px] font-bold ${color}`}>{name}</h2>
      {children}
    </li>
  );
}

export default function App() {
  return (
    <div className="relative flex min-h-screen flex-col overflow-hidden bg-linear-to-b from-[#e3e5e1] via-[#eae7e0] via-25% to-[#ede3db] font-['Roboto',sans-serif]">
      <Wallpaper />
      <EmojiDefs />

      <header className="relative z-10 flex h-[149px] items-start bg-[#075e54] pr-[60px] pl-[46px] text-white shadow-[0_3px_8px_rgba(0,0,0,0.4)]">
        <button type="button" aria-label="Atrás" className="mt-[37px] shrink-0">
          <svg viewBox="0 0 56 56" className="block size-[56px]" fill="none" stroke="#fff" strokeWidth="7.500">
            <path d="M55 28H8" />
            <path d="M30 5L7 28L30 51" strokeLinejoin="round" strokeLinecap="round" strokeWidth="7" />
          </svg>
        </button>
        <svg role="img" aria-label="Foto del grupo" viewBox="0 0 105 105" className="mt-[12px] ml-[15px] size-[105px] shrink-0 rounded-full">
          <defs>
            <linearGradient id="sky">
              <stop offset="0" stopColor="#041c38" />
              <stop offset=".3" stopColor="#020352" />
              <stop offset=".58" stopColor="#07034a" />
              <stop offset=".85" stopColor="#480424" />
              <stop offset="1" stopColor="#2a0525" />
            </linearGradient>
            <radialGradient id="dark"><stop offset=".4" stopColor="#000018" stopOpacity="0" /><stop offset="1" stopColor="#000018" stopOpacity=".7" /></radialGradient>
            <linearGradient id="neon" gradientUnits="userSpaceOnUse" x1="9" y1="0" x2="95" y2="0">
              <stop offset="0" stopColor="#24c3c9" />
              <stop offset=".35" stopColor="#4a55e0" />
              <stop offset=".7" stopColor="#d93bc0" />
              <stop offset="1" stopColor="#f0a050" />
            </linearGradient>
          </defs>
          <rect width="105" height="105" fill="url(#sky)" />
          <rect width="105" height="105" fill="url(#dark)" />
          <g fill="#5a35b0" fillOpacity=".18" stroke="url(#neon)" strokeWidth="1.200">
            <path d="M10 59L27 41Q31 37 38 37H80L73 45H43Q37 45 34 48L24 59Z" />
            <path d="M25 59L35 50Q38 47 42 47H71L65 54H43Q40 54 39 56L36 59Z" />
            <path d="M61 59L81 37H94L74 59Z" />
          </g>
        </svg>
        <div className="ml-[30px] min-w-0 flex-1 pt-[6px]">
          <div className="flex items-start">
            <h1 className="pt-[2px] text-[54px] leading-[64px] whitespace-pre">F1 Girls </h1>
            <Heart />
          </div>
          <p className="mt-[8px] text-[39px] leading-[46px] whitespace-nowrap text-[#e0f3f0]">Dan, Eli, Gal , Itzi , Kia, Pao, Reb, Tú, Val</p>
        </div>
        <button type="button" aria-label="Más opciones" className="mt-[41px] shrink-0">
          <svg viewBox="0 0 24 48" className="block h-[48px] w-[24px]" fill="#fff">
            <circle cx="12" cy="6" r="6" />
            <circle cx="12" cy="24" r="6" />
            <circle cx="12" cy="42" r="6" />
          </svg>
        </button>
      </header>

      <main className="relative flex-1">
        <ul className="flex flex-col items-start gap-[13px] pt-3 pr-[27px] pl-[28px]">
          <Incoming name="Eli" color="text-[#444fb4]" className="mr-[114px] self-stretch pb-[14px]">
            <p className="mt-[20px] text-[48px] leading-[57px] text-black">Pero es lo que estamos pensando las tres y lo sabes</p>
          </Incoming>
          {people.map((p) => (
            <Incoming key={p.name} name={p.name} color={p.color} className="w-[257px] pb-[16px]">
              <div className="mt-[17px]">
                <EyeRoll />
              </div>
            </Incoming>
          ))}
          <li className="relative ml-[113px] flex items-center self-stretch rounded-tl-[17px] bg-[#e1ffc7] pt-[20px] pb-[22px] pl-[26px] text-[48px] leading-[58px] text-black shadow-[0_-1px_1px_rgba(0,0,0,0.12)]">
            <svg aria-hidden="true" viewBox="0 0 22 34" className="absolute top-0 -right-[20px] h-[34px] w-[22px]">
              <path d="M19 0H0V34L21 6Q23 1 19 0Z" fill="#e1ffc7" />
            </svg>
            <p className="flex items-center whitespace-pre">
              Esque ha venido perfecto <Joy />
              <Joy />
              <Joy />
            </p>
          </li>
        </ul>
        <button
          type="button"
          aria-label="Ir al final"
          className="absolute right-[19px] bottom-[18px] flex size-[101px] items-center justify-center rounded-full bg-[#f8f8f8]/95"
        >
          <svg viewBox="0 0 36 34" className="h-[34px] w-[36px]" fill="none" stroke="#9a9e9c" strokeWidth="4">
            <path d="M2 3L18 17L34 3M2 17L18 31L34 17" />
          </svg>
        </button>
      </main>

      <footer className="relative flex items-center gap-[20px] py-[15px] pr-[19px] pl-[15px]">
        <div className="flex h-[141px] min-w-0 flex-1 items-center rounded-full bg-white pr-[30px] pl-[27px]">
          <button type="button" aria-label="Emojis" className="mb-[4px] shrink-0">
            <svg viewBox="0 0 69 69" className="block size-[69px]" fill="#7f8689">
              <circle cx="34.5" cy="34.5" r="32" fill="none" stroke="#7f8689" strokeWidth="5" />
              <ellipse cx="25.500" cy="27" rx="4.500" ry="6.500" />
              <ellipse cx="44" cy="27" rx="4.500" ry="6.500" />
              <path d="M15.500 38Q34.500 42 53.500 38Q52 55 34.500 55Q17 55 15.500 38ZM19 41.500Q20 47 25 49Q34.500 46 44 49Q49 47 50 41.500Q34.500 44.500 19 41.500Z" fillRule="evenodd" />
            </svg>
          </button>
          <input
            type="text"
            aria-label="Escribir mensaje"
            placeholder="Escribir mensaje"
            className="mt-1 ml-[33px] h-[64px] min-w-0 flex-1 text-[54px] leading-[64px] text-black outline-none placeholder:text-[#cbcbcb]"
          />
          <button type="button" aria-label="Adjuntar" className="mx-[8px] shrink-0">
            <svg viewBox="0 0 64 60" className="block h-[60px] w-[64px]" fill="none" stroke="#7f8689" strokeWidth="5" strokeLinecap="round" strokeLinejoin="round">
              <path d="M35 7L57 30Q64 40 58 50Q48 61 37 53L6 23Q0 15 6 7Q14 0 23 7L46 31Q49 36 45 39Q41 42 37 38L21 21" />
            </svg>
          </button>
          <button type="button" aria-label="Cámara" className="ml-[48px] flex size-[63px] shrink-0 items-center justify-center rounded-[17px] bg-[#7f8689]">
            <span className="size-[37px] rounded-full border-[6px] border-white" />
          </button>
        </div>
        <button type="button" aria-label="Mensaje de voz" className="flex size-[132px] shrink-0 items-center justify-center rounded-full bg-[#00897b] shadow-[0_2px_3px_rgba(0,0,0,0.3)]">
          <svg viewBox="0 0 42 60" className="h-[60px] w-[42px]" fill="#fff">
            <rect x="12.500" y="1" width="17" height="35" rx="8.500" />
            <path d="M3 29Q4 43 21 44Q38 43 39 29M21 44V57" fill="none" stroke="#fff" strokeWidth="5" strokeLinecap="round" />
          </svg>
        </button>
      </footer>
    </div>
  );
}
